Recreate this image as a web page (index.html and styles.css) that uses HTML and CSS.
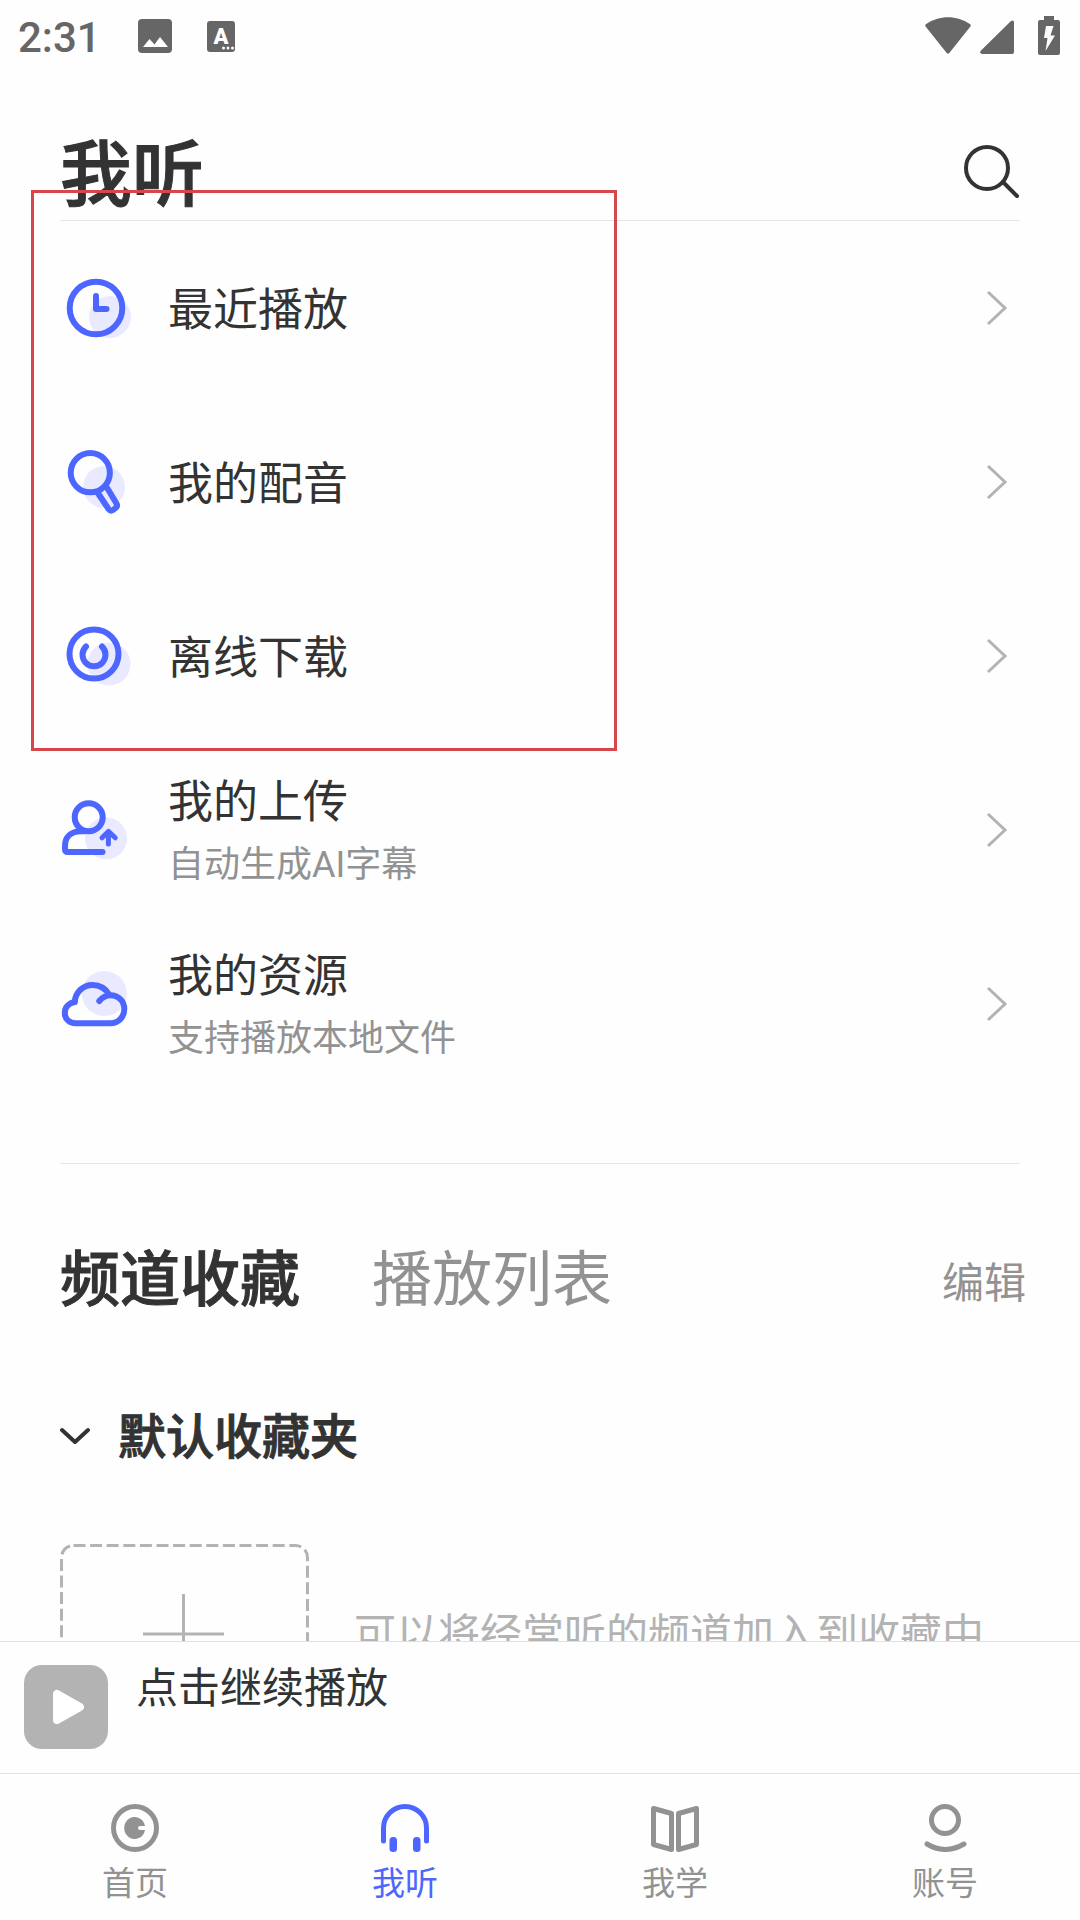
FILE: index.html
```
<!DOCTYPE html>
<html lang="zh-CN">
<head>
    <meta charset="UTF-8">
    <meta name="viewport" content="width=device-width, initial-scale=1.0">
    <title>我听</title>
    <link rel="stylesheet" href="styles.css">
</head>
<body>
    <div class="app">
        <div class="status-bar">
            <span class="time">2:31</span>
            <svg class="status-picture" width="34" height="34" viewBox="0 0 34 34">
                <rect width="34" height="34" rx="4" fill="#666"/>
                <path d="M5 28l6.500-8 5 5.500 5.500-7.500 8 10z" fill="#fff"/>
            </svg>
            <svg width="28" height="31" viewBox="0 0 28 31">
                <rect width="28" height="31" rx="3" fill="#666"/>
                <text class="badge-letter" x="14" y="23" text-anchor="middle">A</text>
                <g fill="#fff"><circle cx="16.500" cy="27" r="1.500"/><circle cx="21" cy="27" r="1.500"/><circle cx="25.500" cy="27" r="1.500"/></g>
            </svg>
            <div class="status-right">
                <svg width="46" height="40" viewBox="0 0 46 40" fill="#666">
                    <path d="M.6 10.500Q-.4 9 1.200 8C14-1 32-1 44.800 8q1.600 1 .6 2.500L24.300 37q-1.300 1.500-2.600 0z"/>
                </svg>
                <svg width="34" height="40" viewBox="0 0 34 40" fill="#666">
                    <path d="M34 6v30q0 2-2 2H2q-3-1-1-3.500L31 5q2.500-1.500 3 1z"/>
                </svg>
                <svg class="status-battery" width="22" height="40" viewBox="0 0 22 40">
                    <path d="M6 0h10v4h4q2 0 2 2v31q0 2-2 2H2q-2 0-2-2V6q0-2 2-2h4z" fill="#666"/>
                    <path d="M8 10h7.500l-3 9.500H17L7.500 35l2-13H6z" fill="#fff"/>
                </svg>
            </div>
        </div>

        <header class="header">
            <h1>我听</h1>
            <button class="search" aria-label="搜索">
                <svg width="60" height="60" viewBox="0 0 60 60" fill="none" stroke="#333" stroke-width="4" stroke-linecap="round">
                    <circle cx="27" cy="26" r="21"/>
                    <path d="M43 40l14 14"/>
                </svg>
            </button>
        </header>

        <main class="content">
            <nav class="menu">
                <a class="menu-item" href="#recent">
                    <svg class="menu-icon" viewBox="0 0 72 72">
                        <circle class="shade" cx="50" cy="45" r="21"/>
                        <circle cx="36" cy="36" r="26.300"/>
                        <path d="M36 24v13h10.500"/>
                    </svg>
                    <span class="menu-text"><span class="menu-title">最近播放</span></span>
                    <svg class="arrow" viewBox="0 0 48 48"><path d="M16 8l17 16-17 16"/></svg>
                </a>
                <a class="menu-item" href="#dubbing">
                    <svg class="menu-icon" viewBox="0 0 72 72">
                        <circle class="shade" cx="44" cy="41" r="21"/>
                        <circle cx="30.300" cy="26.700" r="19.600"/>
                        <path d="M37.500 46.500l11 16.500q2 2.500 4.500 1l2.500-2q2.500-2 1-4.500l-9-15"/>
                    </svg>
                    <span class="menu-text"><span class="menu-title">我的配音</span></span>
                    <svg class="arrow" viewBox="0 0 48 48"><path d="M16 8l17 16-17 16"/></svg>
                </a>
                <a class="menu-item" href="#offline">
                    <svg class="menu-icon" viewBox="0 0 72 72">
                        <circle class="shade" cx="49" cy="44" r="21.500"/>
                        <circle cx="34" cy="34" r="24.500"/>
                        <path d="M26 26.500a11.500 11.500 0 1 0 16 0"/>
                    </svg>
                    <span class="menu-text"><span class="menu-title">离线下载</span></span>
                    <svg class="arrow" viewBox="0 0 48 48"><path d="M16 8l17 16-17 16"/></svg>
                </a>
                <a class="menu-item" href="#upload">
                    <svg class="menu-icon" viewBox="0 0 72 72">
                        <circle class="shade" cx="46" cy="44.300" r="21"/>
                        <circle cx="28.700" cy="23.300" r="14"/>
                        <path d="M25 37.300h-4C11 37.300 5 43 5 52v3q0 3 3 3h34.500"/>
                        <path d="M48.400 50V37.500M42 43.800l6.400-6.400 6.800 6.400" stroke-width="5"/>
                    </svg>
                    <span class="menu-text">
                        <span class="menu-title">我的上传</span>
                        <span class="menu-note">自动生成AI字幕</span>
                    </span>
                    <svg class="arrow" viewBox="0 0 48 48"><path d="M16 8l17 16-17 16"/></svg>
                </a>
                <a class="menu-item" href="#files">
                    <svg class="menu-icon" viewBox="0 0 72 72">
                        <circle class="shade" cx="44.300" cy="25.500" r="22.500"/>
                        <path d="M14.700 34C9 35 4.800 39 4.800 45c0 6 4.700 10.300 10.700 10.300h35c7.800 0 13.800-6.300 13.800-14.300S58.300 27.300 50.500 27.300c-5 0-8.500 2.500-11.200 5.700"/>
                        <path d="M14.700 34C15.500 24 23 17 32.500 17c7.500 0 13.500 4 17 10"/>
                    </svg>
                    <span class="menu-text">
                        <span class="menu-title">我的资源</span>
                        <span class="menu-note">支持播放本地文件</span>
                    </span>
                    <svg class="arrow" viewBox="0 0 48 48"><path d="M16 8l17 16-17 16"/></svg>
                </a>
            </nav>

            <section class="favorites">
                <div class="tabs">
                    <button class="tab active">频道收藏</button>
                    <button class="tab">播放列表</button>
                    <button class="edit">编辑</button>
                </div>
                <button class="folder">
                    <svg width="30" height="30" viewBox="0 0 30 30" fill="none" stroke="#333" stroke-width="4" stroke-linecap="round" stroke-linejoin="round">
                        <path d="M2 7l13 12 13-12"/>
                    </svg>
                    默认收藏夹
                </button>
                <div class="empty">
                    <button class="add" aria-label="添加频道">
                        <svg width="249" height="182" viewBox="0 0 249 182" fill="none" stroke="#b3b3b3" stroke-width="3">
                            <rect x="1.500" y="1.500" width="246" height="179" rx="12" stroke-dasharray="12 4.600"/>
                            <path d="M83 90h81M123.500 50v80"/>
                        </svg>
                    </button>
                    <span class="empty-text">可以将经常听的频道加入到收藏中</span>
                </div>
            </section>
        </main>

        <div class="player">
            <button class="play" aria-label="播放">
                <svg width="84" height="84" viewBox="0 0 84 84">
                    <path d="M33 29v26l23-13z" fill="#fff" stroke="#fff" stroke-width="8" stroke-linejoin="round"/>
                </svg>
            </button>
            <span class="player-text">点击继续播放</span>
        </div>

        <nav class="tab-bar">
            <a href="#home">
                <svg width="48" height="48" viewBox="0 0 48 48">
                    <circle cx="24" cy="24" r="21.500" fill="none" stroke="currentColor" stroke-width="5"/>
                    <path d="M34 22h-5q-2 0-2 2t2 2h5a10.500 11 0 1 1 0-4z" fill="currentColor"/>
                </svg>
                首页
            </a>
            <a class="current" href="#listen">
                <svg width="48" height="48" viewBox="0 0 48 48">
                    <path d="M2.500 37V24a21.500 21.500 0 0 1 43 0v13" fill="none" stroke="currentColor" stroke-width="5" stroke-linecap="round"/>
                    <g fill="currentColor"><rect x="8.500" y="33" width="7.500" height="15" rx="3.500"/><rect x="32" y="33" width="7.500" height="15" rx="3.500"/></g>
                </svg>
                我听
            </a>
            <a href="#learn">
                <svg width="48" height="48" viewBox="0 0 48 48" fill="none" stroke="currentColor" stroke-width="5" stroke-linejoin="round">
                    <path d="M2.500 4.500l18 5v36l-18-5zM45.500 4.500l-18 5v36l18-5z"/>
                </svg>
                我学
            </a>
            <a href="#account">
                <svg width="48" height="48" viewBox="0 0 48 48" fill="none" stroke="currentColor" stroke-width="5" stroke-linecap="round">
                    <circle cx="24" cy="16" r="13.500"/>
                    <path d="M6 40q18 11 37 0"/>
                </svg>
                账号
            </a>
        </nav>

        <div class="highlight"></div>
    </div>
</body>
</html>
```
FILE: styles.css
```
* {
    box-sizing: border-box;
}

body {
    margin: 0;
    background-color: #fefefe;
    color: #333;
    font-family: Roboto, "Noto Sans CJK SC", sans-serif;
}

button {
    padding: 0;
    border: none;
    background: none;
    color: inherit;
    font: inherit;
    cursor: pointer;
}

a {
    color: inherit;
    text-decoration: none;
}

svg {
    display: block;
    flex-shrink: 0;
}

.app {
    position: relative;
    display: flex;
    flex-direction: column;
    height: 100vh;
    overflow: hidden;
}

/* Status bar */
.status-bar {
    display: flex;
    align-items: center;
    flex-shrink: 0;
    height: 72px;
    padding: 0 20px 0 18px;
    color: #666;
}

.time {
    padding-top: 4px;
    font-size: 42px;
    font-weight: 500;
    line-height: 68px;
}

.status-picture {
    margin: 0 35px 0 37px;
}

.badge-letter {
    fill: #fff;
    font-size: 22px;
    font-weight: 900;
}

.status-right {
    display: flex;
    gap: 9px;
    margin-left: auto;
}

.status-battery {
    margin-left: 15px;
}

/* Title */
.header {
    display: flex;
    align-items: flex-end;
    justify-content: space-between;
    flex-shrink: 0;
    margin: 0 60px;
    padding-top: 60px;
    border-bottom: 1px solid #e5e5e5;
}

h1 {
    margin: 0;
    font-size: 72px;
    font-weight: 500;
    line-height: 88px;
}

h1,
.tab.active,
.folder {
    -webkit-text-stroke: 1px #333;
}

.search {
    padding-bottom: 18px;
}

.content {
    flex: 1;
    min-height: 0;
    overflow: hidden;
}

/* Menu */
.menu {
    margin: 0 60px;
    padding-bottom: 72px;
    border-bottom: 1px solid #e5e5e5;
}

.menu-item {
    display: flex;
    align-items: center;
    gap: 36px;
    height: 174px;
}

.menu-icon {
    width: 72px;
    height: 72px;
    fill: none;
    stroke: #4d66ff;
    stroke-width: 6;
    stroke-linecap: round;
    stroke-linejoin: round;
}

.menu-icon .shade {
    fill: #e9eaff;
    stroke: none;
}

.menu-text {
    display: flex;
    flex: 1;
    flex-direction: column;
    padding-top: 6px;
}

.menu-title {
    font-size: 45px;
    line-height: 64px;
}

.menu-note {
    color: #929292;
    font-size: 36px;
    line-height: 60px;
}

.arrow {
    width: 48px;
    height: 48px;
    fill: none;
    stroke: #b3b3b3;
    stroke-width: 3;
}

/* Favorites */
.favorites {
    padding: 75px 54px 0 60px;
}

.tabs {
    display: flex;
    align-items: center;
    gap: 72px;
    line-height: 84px;
}

.tab {
    color: #929292;
    font-size: 60px;
}

.tab.active {
    color: #333;
    font-weight: 500;
}

.edit {
    margin-left: auto;
    padding-top: 6px;
    color: #929292;
    font-size: 42px;
    line-height: 78px;
}

.folder {
    display: flex;
    align-items: center;
    gap: 28px;
    margin: 79px 0 70px;
    font-size: 48px;
    font-weight: 500;
    line-height: 72px;
}

.empty {
    display: flex;
    align-items: center;
    gap: 45px;
    color: #b3b3b3;
    font-size: 42px;
    white-space: nowrap;
}

.empty-text {
    padding-bottom: 10px;
}

/* Player */
.player {
    display: flex;
    flex-shrink: 0;
    gap: 28px;
    padding: 23px 24px 24px;
    border-top: 1px solid #e0e0e0;
}

.play {
    border-radius: 18px;
    background-color: #b3b3b3;
}

.player-text {
    font-size: 42px;
    line-height: 48px;
}

/* Bottom navigation */
.tab-bar {
    display: flex;
    flex-shrink: 0;
    border-top: 1px solid #e0e0e0;
}

.tab-bar a {
    display: flex;
    flex: 1;
    flex-direction: column;
    align-items: center;
    gap: 8px;
    padding: 30px 0 12px;
    color: #929292;
    font-size: 33px;
    line-height: 48px;
}

.tab-bar .current {
    color: #4d66ff;
}

/* Red frame over the first menu items */
.highlight {
    position: absolute;
    top: 190px;
    left: 31px;
    width: 586px;
    height: 561px;
    border: 3px solid #d6474c;
    pointer-events: none;
}
```
